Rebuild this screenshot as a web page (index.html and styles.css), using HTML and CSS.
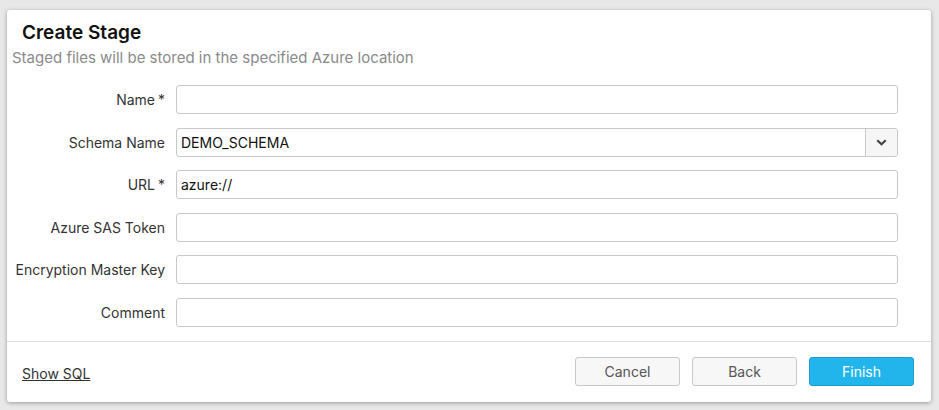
FILE: index.html
```html
<!DOCTYPE html>
<html lang="en">

<head>
    <meta charset="UTF-8">
    <title>Create Stage</title>
    <link rel="stylesheet" href="styles.css">
</head>

<body>
    <div class="dialog">
        <div class="dialog-header">
            <h1>Create Stage</h1>
            <p>Staged files will be stored in the specified Azure location</p>
        </div>

        <!-- Stage form -->
        <div class="form">
            <label class="form-label">Name<span class="req">*</span></label>
            <div class="form-control"></div>

            <label class="form-label">Schema Name</label>
            <div class="form-control select">
                <span class="select-value">DEMO_SCHEMA</span>
                <span class="select-arrow">
                    <svg width="11" height="7" viewBox="0 0 11 7">
                        <path d="M1.3 1.2 L5.5 5.3 L9.7 1.2" fill="none" stroke="#444" stroke-width="2.2" />
                    </svg>
                </span>
            </div>

            <label class="form-label">URL<span class="req">*</span></label>
            <div class="form-control">azure://</div>

            <label class="form-label">Azure SAS Token</label>
            <div class="form-control"></div>

            <label class="form-label">Encryption Master Key</label>
            <div class="form-control"></div>

            <label class="form-label">Comment</label>
            <div class="form-control"></div>
        </div>

        <div class="dialog-footer">
            <a class="show-sql">Show SQL</a>
            <div class="actions">
                <button class="btn">Cancel</button>
                <button class="btn">Back</button>
                <button class="btn btn-primary">Finish</button>
            </div>
        </div>
    </div>
</body>

</html>
```

FILE: styles.css
```css
* {
    margin: 0;
    padding: 0;
    box-sizing: border-box;
}

body {
    font-family: Inter, 'Liberation Sans', sans-serif;
    background: #e8e8e8;
    width: 939px;
    height: 410px;
    overflow: hidden;
}

.dialog {
    margin: 10px 0 0 7px;
    width: 924px;
    height: 392px;
    background: white;
    border-radius: 3px;
    box-shadow: 0 1px 4px rgba(0, 0, 0, 0.35);
    display: flex;
    flex-direction: column;
}

.dialog-header {
    padding: 11px 0 0 5px;
}

.dialog-header h1 {
    font-size: 19px;
    font-weight: 600;
    color: #111;
    padding-left: 10px;
    line-height: 24px;
}

.dialog-header p {
    margin-top: 3px;
    font-size: 15px;
    color: #8a8a8a;
    line-height: 20px;
}

.form {
    display: grid;
    grid-template-columns: 158px 722px;
    column-gap: 11px;
    row-gap: 13.5px;
    padding: 17px 0 14px 0;
    border-bottom: 1px solid #dcdcdc;
}

.form-label {
    font-size: 14px;
    color: #333;
    text-align: right;
    align-self: center;
    white-space: nowrap;
}

.req {
    margin-left: 3px;
}

.form-control {
    height: 29px;
    border: 1px solid #c8c8c8;
    border-radius: 3px;
    padding: 0 4px;
    font-size: 14px;
    color: #111;
    line-height: 27px;
}

.select {
    display: flex;
    padding-right: 0;
}

.select-value {
    flex: 1;
}

.select-arrow {
    width: 32px;
    border-left: 1px solid #c8c8c8;
    background: #f6f6f6;
    border-radius: 0 3px 3px 0;
    display: flex;
    align-items: center;
    justify-content: center;
}

.dialog-footer {
    flex: 1;
    display: flex;
    align-items: center;
    justify-content: space-between;
    padding: 0 17px 0 15px;
}

.show-sql {
    font-size: 14px;
    color: #333;
    text-decoration: underline;
    margin-top: 3px;
}

.actions {
    display: flex;
    gap: 12px;
}

.btn {
    width: 105px;
    height: 29px;
    border: 1px solid #c8c8c8;
    border-radius: 3px;
    background: #f7f7f7;
    color: #555;
    font-family: Inter, 'Liberation Sans', sans-serif;
    font-size: 14px;
}

.btn-primary {
    background: #22b5ec;
    border-color: #1a9ed2;
    color: white;
}
```
